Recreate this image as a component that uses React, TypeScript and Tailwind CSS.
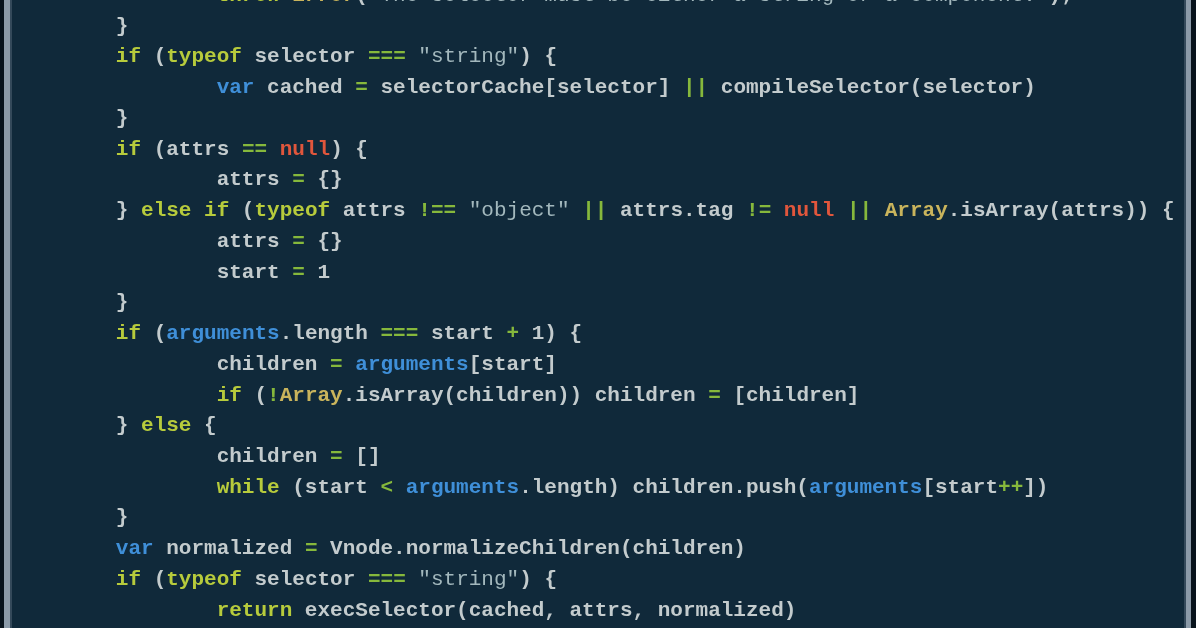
import React from "react";

type Tok = [string, string];

const K = "text-[#b7cb3c]";
const V = "text-[#3f8fd8]";
const O = "text-[#86b83c]";
const N = "text-[#e0563c]";
const A = "text-[#c9b45c]";
const S = "text-[#a3b8bd] font-normal";
const P = "text-[#c3cbcd]";

const lines: [number, Tok[]][] = [
  [2, [[K, "throw"], [P, " "], [A, "Error"], [P, "("], [S, '"The selector must be either a string or a component."'], [P, ");"]]],
  [1, [[P, "}"]]],
  [1, [[K, "if"], [P, " ("], [K, "typeof"], [P, " selector "], [O, "==="], [P, " "], [S, '"string"'], [P, ") {"]]],
  [2, [[V, "var"], [P, " cached "], [O, "="], [P, " selectorCache[selector] "], [O, "||"], [P, " compileSelector(selector)"]]],
  [1, [[P, "}"]]],
  [1, [[K, "if"], [P, " (attrs "], [O, "=="], [P, " "], [N, "null"], [P, ") {"]]],
  [2, [[P, "attrs "], [O, "="], [P, " {}"]]],
  [1, [[P, "} "], [K, "else if"], [P, " ("], [K, "typeof"], [P, " attrs "], [O, "!=="], [P, " "], [S, '"object"'], [P, " "], [O, "||"], [P, " attrs.tag "], [O, "!="], [P, " "], [N, "null"], [P, " "], [O, "||"], [P, " "], [A, "Array"], [P, ".isArray(attrs)) {"]]],
  [2, [[P, "attrs "], [O, "="], [P, " {}"]]],
  [2, [[P, "start "], [O, "="], [P, " 1"]]],
  [1, [[P, "}"]]],
  [1, [[K, "if"], [P, " ("], [V, "arguments"], [P, ".length "], [O, "==="], [P, " start "], [O, "+"], [P, " 1) {"]]],
  [2, [[P, "children "], [O, "="], [P, " "], [V, "arguments"], [P, "[start]"]]],
  [2, [[K, "if"], [P, " ("], [O, "!"], [A, "Array"], [P, ".isArray(children)) children "], [O, "="], [P, " [children]"]]],
  [1, [[P, "} "], [K, "else"], [P, " {"]]],
  [2, [[P, "children "], [O, "="], [P, " []"]]],
  [2, [[K, "while"], [P, " (start "], [O, "<"], [P, " "], [V, "arguments"], [P, ".length) children.push("], [V, "arguments"], [P, "[start"], [O, "++"], [P, "])"]]],
  [1, [[P, "}"]]],
  [1, [[V, "var"], [P, " normalized "], [O, "="], [P, " Vnode.normalizeChildren(children)"]]],
  [1, [[K, "if"], [P, " ("], [K, "typeof"], [P, " selector "], [O, "==="], [P, " "], [S, '"string"'], [P, ") {"]]],
  [2, [[K, "return"], [P, " execSelector(cached, attrs, normalized)"]]],
  [1, [[P, "}"]]],
];

function CodeLine({ indent, toks }: { indent: number; toks: Tok[] }) {
  return (
    <div className="whitespace-pre h-[30.74px]">
      {" ".repeat(indent * 8)}
      {toks.map(([c, t], i) => (
        <span key={i} className={c}>
          {t}
        </span>
      ))}
    </div>
  );
}

export default function App() {
  return (
    <div className="flex w-[1196px] h-[628px] overflow-hidden bg-[#10283a]">
      <div className="w-[4px] bg-[#08131c]" />
      <div className="w-[6px] bg-[#8b9aa8]" />
      <div className="w-[2px] bg-[#34495a]" />
      <div className="flex-1 overflow-hidden bg-[#10293a] pl-[3px]">
        <div className="mt-[-19px] font-['Liberation_Mono',monospace] font-bold text-[21px] leading-[30.74px] blur-[0.4px]">
          {lines.map(([ind, toks], i) => (
            <CodeLine key={i} indent={ind} toks={toks} />
          ))}
        </div>
      </div>
      <div className="w-[2px] bg-[#34495a]" />
      <div className="w-[5px] bg-[#8b9aa8]" />
      <div className="w-[5px] bg-[#08131c]" />
    </div>
  );
}
